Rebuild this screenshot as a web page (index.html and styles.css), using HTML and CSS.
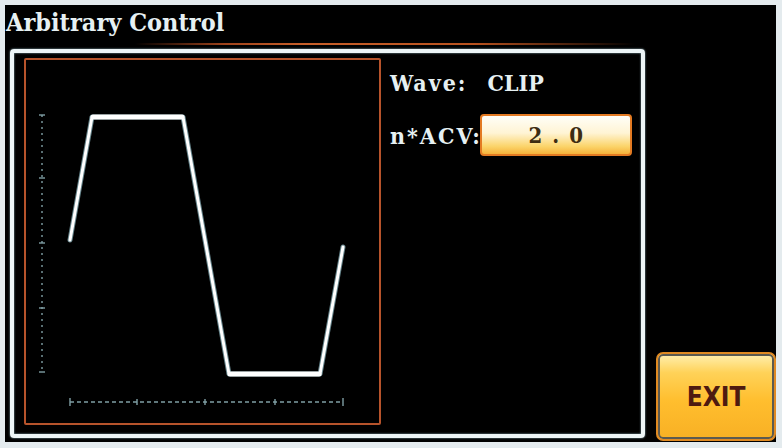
FILE: index.html
```html
<!DOCTYPE html>
<html>
<head>
<meta charset="utf-8">
<link rel="stylesheet" href="styles.css">
</head>
<body>
<div class="screen">
  <div class="title">Arbitrary Control</div>
  <div class="body">
    <div class="frame">
      <div class="chart">
        <svg width="353" height="363" viewBox="26 60 353 363" xmlns="http://www.w3.org/2000/svg">
          <g stroke="#7f9ea4" stroke-width="1.4" fill="none">
            <line x1="42" y1="115" x2="42" y2="372" stroke-dasharray="2 4"/>
            <line x1="39" y1="115" x2="45" y2="115"/>
            <line x1="39" y1="178" x2="45" y2="178"/>
            <line x1="39" y1="243" x2="45" y2="243"/>
            <line x1="39" y1="308" x2="45" y2="308"/>
            <line x1="39" y1="372" x2="45" y2="372"/>
            <line x1="70" y1="402" x2="343" y2="402" stroke-dasharray="4 3"/>
            <line x1="70" y1="398" x2="70" y2="406"/>
            <line x1="137" y1="399" x2="137" y2="405"/>
            <line x1="205" y1="399" x2="205" y2="405"/>
            <line x1="275" y1="399" x2="275" y2="405"/>
            <line x1="343" y1="398" x2="343" y2="406"/>
          </g>
          <g fill="none" stroke-linejoin="round" stroke-linecap="round">
            <polyline points="70,240 92,117 183,117 229,374 320,374 343,247" stroke="#a9dbe6" stroke-width="5" opacity="0.6"/>
            <polyline points="70,240 92,117 183,117 229,374 320,374 343,247" stroke="#ffffff" stroke-width="3"/>
            <line x1="93" y1="117" x2="182" y2="117" stroke="#ffffff" stroke-width="5"/>
            <line x1="230" y1="374" x2="319" y2="374" stroke="#ffffff" stroke-width="5"/>
          </g>
        </svg>
      </div>
      <div class="panel">
        <div class="row">
          <span class="label">Wave:</span>
          <span class="value">CLIP</span>
        </div>
        <div class="row">
          <span class="label">n*ACV:</span>
          <span class="field">2.0</span>
        </div>
      </div>
    </div>
    <div class="exit">EXIT</div>
  </div>
</div>
</body>
</html>
```

FILE: styles.css
```css
html, body {
  margin: 0;
  padding: 0;
}
body {
  width: 782px;
  height: 448px;
  background: #e4ebee;
  overflow: hidden;
}
.screen {
  margin: 5px 6px 0 5px;
  width: 771px;
  height: 437px;
  background: #000;
  display: flex;
  flex-direction: column;
}
.title {
  height: 44px;
  box-sizing: border-box;
  padding: 3px 0 0 1px;
  color: #e6f0f2;
  font-family: "DejaVu Serif Condensed", "DejaVu Serif", serif;
  font-weight: bold;
  font-size: 25px;
  line-height: 30px;
  background-image: linear-gradient(to right, rgba(0,0,0,0) 130px, #a0441c 220px, #c8602a 300px, #b8521f 470px, rgba(0,0,0,0) 630px);
  background-size: 100% 2px;
  background-repeat: no-repeat;
  background-position: 0 38px;
}
.body {
  flex: 1;
  display: flex;
  align-items: flex-start;
}
.frame {
  margin-left: 5px;
  width: 635px;
  height: 389px;
  box-sizing: border-box;
  border: 4px solid #edf5f7;
  border-radius: 4px;
  box-shadow: 0 0 2px #9fc6d0, inset 0 0 2px #9fc6d0;
  display: flex;
  padding: 5px 0 0 10px;
}
.chart {
  flex: none;
  width: 357px;
  height: 367px;
  box-sizing: border-box;
  border: 2px solid #b6532b;
  border-radius: 2px;
}
.chart svg {
  display: block;
}
.panel {
  display: flex;
  flex-direction: column;
  padding: 3px 0 0 9px;
  gap: 11px;
}
.row {
  display: flex;
  align-items: center;
  height: 42px;
  font-family: "DejaVu Serif Condensed", "DejaVu Serif", serif;
  font-weight: bold;
  font-size: 23px;
  color: #e6f0f2;
}
.label {
  flex: none;
  letter-spacing: 2px;
}
.value {
  margin-left: 20px;
}
.field {
  flex: none;
  width: 152px;
  height: 42px;
  box-sizing: border-box;
  border: 2px solid #e37a22;
  border-radius: 4px;
  background: linear-gradient(to bottom, #fffef8 0%, #fff4d4 45%, #fbd46a 80%, #f5b23a 100%);
  color: #3d2c12;
  font-family: "DejaVu Serif Condensed", "DejaVu Serif", serif;
  font-weight: bold;
  font-size: 22px;
  letter-spacing: 10px;
  padding-left: 10px;
  margin-left: -2px;
  display: flex;
  align-items: center;
  justify-content: center;
}
.exit {
  margin-left: 11px;
  margin-top: 303px;
  width: 120px;
  height: 89px;
  box-sizing: border-box;
  border: 2px solid #e08a22;
  border-radius: 7px;
  box-shadow: inset 0 0 0 2px #5c5a50;
  background: linear-gradient(to bottom, #fff0b0 0%, #ffd258 22%, #ffbe2e 55%, #f8b024 100%);
  color: #4e1a10;
  font-family: "DejaVu Sans Condensed", "DejaVu Sans", sans-serif;
  font-weight: bold;
  font-size: 26px;
  display: flex;
  align-items: center;
  justify-content: center;
}
```
